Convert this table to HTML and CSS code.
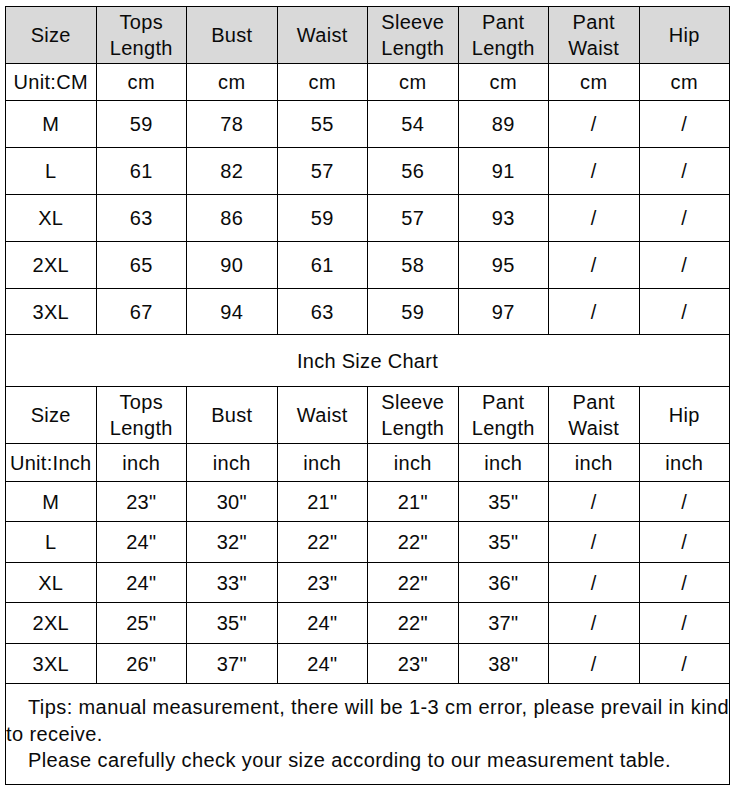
FILE: index.html
```html
<!DOCTYPE html>
<html>
<head>
<meta charset="utf-8">
<link rel="stylesheet" href="styles.css">
</head>
<body>
<div class="wrap">
<table class="chart">
  <colgroup>
    <col class="c1"><col class="c2"><col class="c3"><col class="c4"><col class="c5"><col class="c6"><col class="c7"><col class="c8">
  </colgroup>
  <tbody>
    <tr class="head gray">
      <td>Size</td><td>Tops<br>Length</td><td>Bust</td><td>Waist</td><td>Sleeve<br>Length</td><td>Pant<br>Length</td><td>Pant<br>Waist</td><td>Hip</td>
    </tr>
    <tr class="unit">
      <td>Unit:CM</td><td>cm</td><td>cm</td><td>cm</td><td>cm</td><td>cm</td><td>cm</td><td>cm</td>
    </tr>
    <tr class="r47"><td>M</td><td>59</td><td>78</td><td>55</td><td>54</td><td>89</td><td>/</td><td>/</td></tr>
    <tr class="r47"><td>L</td><td>61</td><td>82</td><td>57</td><td>56</td><td>91</td><td>/</td><td>/</td></tr>
    <tr class="r47"><td>XL</td><td>63</td><td>86</td><td>59</td><td>57</td><td>93</td><td>/</td><td>/</td></tr>
    <tr class="r47"><td>2XL</td><td>65</td><td>90</td><td>61</td><td>58</td><td>95</td><td>/</td><td>/</td></tr>
    <tr class="r46"><td>3XL</td><td>67</td><td>94</td><td>63</td><td>59</td><td>97</td><td>/</td><td>/</td></tr>
    <tr class="title"><td colspan="8">Inch Size Chart</td></tr>
    <tr class="head">
      <td>Size</td><td>Tops<br>Length</td><td>Bust</td><td>Waist</td><td>Sleeve<br>Length</td><td>Pant<br>Length</td><td>Pant<br>Waist</td><td>Hip</td>
    </tr>
    <tr class="unit2">
      <td>Unit:Inch</td><td>inch</td><td>inch</td><td>inch</td><td>inch</td><td>inch</td><td>inch</td><td>inch</td>
    </tr>
    <tr class="r40"><td>M</td><td>23"</td><td>30"</td><td>21"</td><td>21"</td><td>35"</td><td>/</td><td>/</td></tr>
    <tr class="r41"><td>L</td><td>24"</td><td>32"</td><td>22"</td><td>22"</td><td>35"</td><td>/</td><td>/</td></tr>
    <tr class="r40"><td>XL</td><td>24"</td><td>33"</td><td>23"</td><td>22"</td><td>36"</td><td>/</td><td>/</td></tr>
    <tr class="r41"><td>2XL</td><td>25"</td><td>35"</td><td>24"</td><td>22"</td><td>37"</td><td>/</td><td>/</td></tr>
    <tr class="r40"><td>3XL</td><td>26"</td><td>37"</td><td>24"</td><td>23"</td><td>38"</td><td>/</td><td>/</td></tr>
    <tr class="tips">
      <td colspan="8">
        <div class="line indent">Tips: manual measurement, there will be 1-3 cm error, please prevail in kind</div>
        <div class="line">to receive.</div>
        <div class="line indent">Please carefully check your size according to our measurement table.</div>
      </td>
    </tr>
  </tbody>
</table>
</div>
</body>
</html>
```
FILE: styles.css
```css
html, body {
  margin: 0;
  padding: 0;
  background: #ffffff;
}
.wrap {
  padding: 6px 0 0 5px;
}
.chart {
  border-collapse: collapse;
  table-layout: fixed;
  width: 724px;
  font-family: "Liberation Sans", Arial, sans-serif;
  font-size: 20px;
  color: #0a0a0a;
}
.chart col { width: 90.5px; }
.chart td {
  border: 1px solid #000000;
  padding: 0;
  text-align: center;
  vertical-align: middle;
  line-height: 26px;
  letter-spacing: 0.3px;
  white-space: nowrap;
  overflow: hidden;
}
.gray td { background: #d9d9d9; }
.head { height: 57px; }
.unit { height: 37px; }
.r47 { height: 47px; }
.r46 { height: 46px; }
.title { height: 52px; }
.unit2 { height: 38px; }
.r40 { height: 40px; }
.r41 { height: 41px; }
.tips { height: 101px; }
.tips td {
  text-align: left;
  padding: 0;
  line-height: 26.5px;
  letter-spacing: 0.4px;
}
.line { white-space: nowrap; }
.indent { padding-left: 22px; }
```
